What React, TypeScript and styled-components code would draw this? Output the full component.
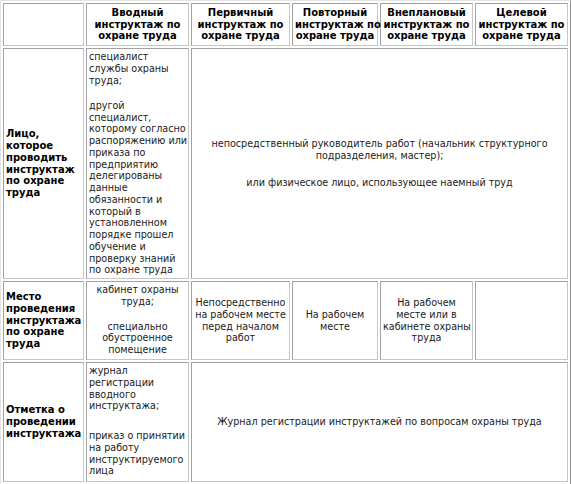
import React from "react";
import styled, { createGlobalStyle } from "styled-components";

const LINE = 11.75;

const GlobalStyle = createGlobalStyle`
  html, body {
    margin: 0;
    padding: 0;
    background: #ffffff;
    overflow: hidden;
  }
`;

const Table = styled.table`
  border-collapse: separate;
  border-spacing: 2px;
  table-layout: fixed;
  width: 571px;
  border: 1px solid;
  border-color: #e4e4e4 #8e8e8e #8e8e8e #e4e4e4;
  font-family: "DejaVu Sans", Verdana, sans-serif;
  font-size: 9.6px;
  color: #1a1a1a;
`;

const Row = styled.tr<{ $h: number }>`
  height: ${(p) => p.$h}px;
`;

const Cell = styled.td<{
  $align?: "left" | "center";
  $valign?: "top" | "middle";
  $w?: number;
  $bold?: boolean;
}>`
  box-sizing: border-box;
  ${(p) => (p.$w ? `width: ${p.$w}px;` : "")}
  border: 1px solid;
  border-color: #a2a2a2 #c6c6c6 #c6c6c6 #a2a2a2;
  padding: 2px;
  text-align: ${(p) => p.$align ?? "left"};
  vertical-align: ${(p) => p.$valign ?? "middle"};
  font-family: "DejaVu Sans", Verdana, sans-serif;
  font-weight: ${(p) => (p.$bold ? 700 : 400)};
  font-size: ${(p) => (p.$bold ? "10px" : "9.6px")};
  color: ${(p) => (p.$bold ? "#000" : "#1a1a1a")};
  white-space: nowrap;
`;

const HeadCell = styled(Cell).attrs({ as: "th" })`
  font-weight: 700;
  font-size: 10px;
  color: #000;
  text-align: center;
  vertical-align: middle;
`;

const Para = styled.div<{ $gap?: number }>`
  margin: 0;
  margin-top: ${(p) => p.$gap ?? 0}px;
`;

const Line = styled.span`
  display: block;
  height: ${LINE}px;
  line-height: ${LINE}px;
`;

const Lines: React.FC<{ text: string }> = ({ text }) => (
  <>
    {text.split("\n").map((t, i) => (
      <Line key={i}>{t}</Line>
    ))}
  </>
);

const widths = [81, 103, 99, 86, 93, 93];

const headers = [
  "",
  "Вводный\nинструктаж по\nохране труда",
  "Первичный\nинструктаж по\nохране труда",
  "Повторный\nинструктаж по\nохране труда",
  "Внеплановый\nинструктаж по\nохране труда",
  "Целевой\nинструктаж по\nохране труда",
];

export default function App() {
  return (
    <>
      <GlobalStyle />
      <Table>
        <thead>
          <Row $h={43}>
            {headers.map((h, i) => (
              <HeadCell key={i} $w={widths[i]}>
                <Lines text={h} />
              </HeadCell>
            ))}
          </Row>
        </thead>
        <tbody>
          <Row $h={231}>
            <Cell $bold>
              <Lines text={"Лицо,\nкоторое\nпроводить\nинструктаж\nпо охране\nтруда"} />
            </Cell>
            <Cell $valign="top">
              <Para>
                <Lines text={"специалист\nслужбы охраны\nтруда;"} />
              </Para>
              <Para $gap={13.5}>
                <Lines
                  text={
                    "другой\nспециалист,\nкоторому согласно\nраспоряжению или\nприказа по\nпредприятию\nделегированы\nданные\nобязанности и\nкоторый в\nустановленном\nпорядке прошел\nобучение и\nпроверку знаний\nпо охране труда"
                  }
                />
              </Para>
            </Cell>
            <Cell colSpan={4} $align="center">
              <Para>
                <Lines
                  text={
                    "непосредственный руководитель работ (начальник структурного\nподразделения, мастер);"
                  }
                />
              </Para>
              <Para $gap={16}>
                <Lines text={"или физическое лицо, использующее наемный труд"} />
              </Para>
            </Cell>
          </Row>
          <Row $h={79}>
            <Cell $bold>
              <Lines text={"Место\nпроведения\nинструктажа\nпо охране\nтруда"} />
            </Cell>
            <Cell $align="center" $valign="top">
              <Para>
                <Lines text={"кабинет охраны\nтруда;"} />
              </Para>
              <Para $gap={13}>
                <Lines text={"специально\nобустроенное\nпомещение"} />
              </Para>
            </Cell>
            <Cell $align="center">
              <Lines text={"Непосредственно\nна рабочем месте\nперед началом\nработ"} />
            </Cell>
            <Cell $align="center">
              <Lines text={"На рабочем\nместе"} />
            </Cell>
            <Cell $align="center">
              <Lines text={"На рабочем\nместе или в\nкабинете охраны\nтруда"} />
            </Cell>
            <Cell />
          </Row>
          <Row $h={120}>
            <Cell $bold>
              <Lines text={"Отметка о\nпроведении\nинструктажа"} />
            </Cell>
            <Cell $valign="top">
              <Para>
                <Lines text={"журнал\nрегистрации\nвводного\nинструктажа;"} />
              </Para>
              <Para $gap={18}>
                <Lines text={"приказ о принятии\nна работу\nинструктируемого\nлица"} />
              </Para>
            </Cell>
            <Cell colSpan={4} $align="center">
              <Lines text={"Журнал регистрации инструктажей по вопросам охраны труда"} />
            </Cell>
          </Row>
          <Row $h={60}>
            <Cell />
            <Cell />
            <Cell />
            <Cell />
            <Cell />
            <Cell />
          </Row>
        </tbody>
      </Table>
    </>
  );
}
